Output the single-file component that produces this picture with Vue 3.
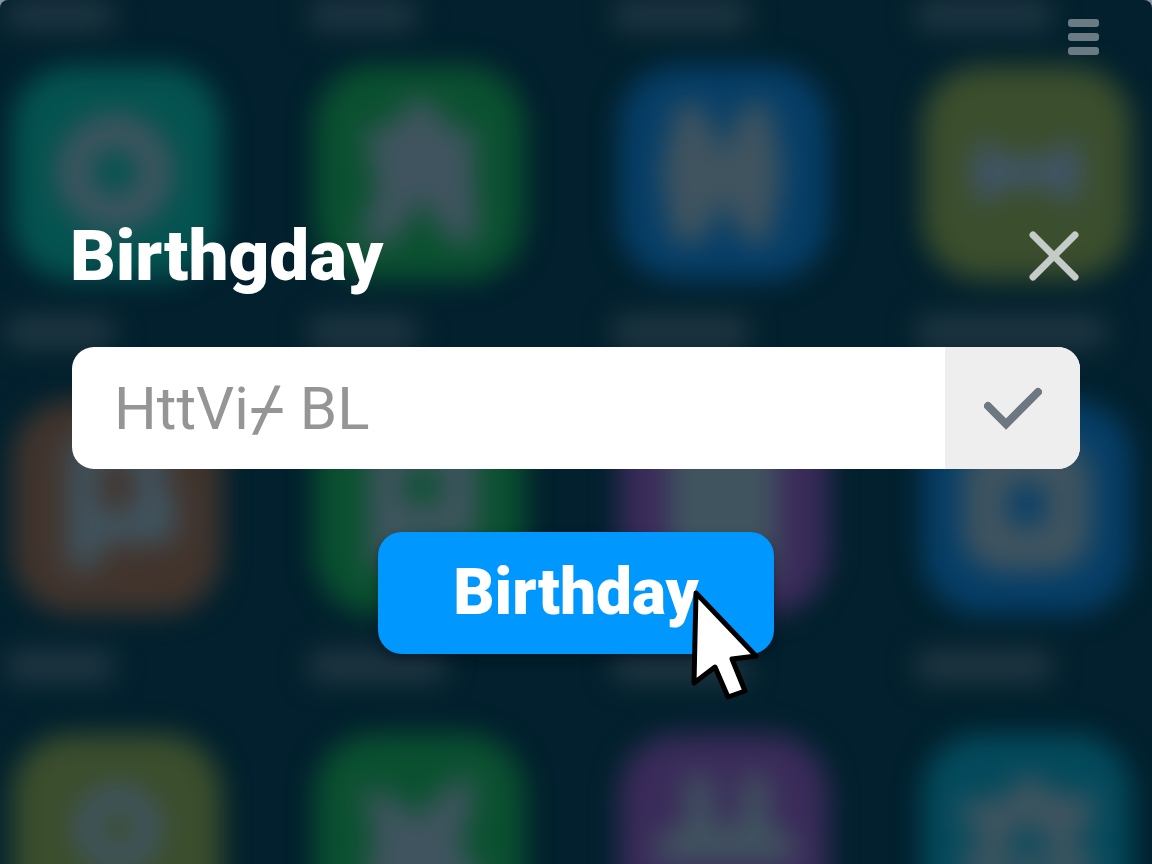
<script setup>
import { ref } from 'vue'

const name = ref('')

const apps = [
  { tone: 'teal', label: 'short', glyph: 'ring' },
  { tone: 'green', label: 'short', glyph: 'puzzle' },
  { tone: 'blue', label: 'medium', glyph: 'butterfly' },
  { tone: 'olive', label: 'long', glyph: 'dumbbell' },
  { tone: 'brown', label: 'short', glyph: 'stamp' },
  { tone: 'green', label: 'medium', glyph: 'loop' },
  { tone: 'purple', label: 'medium', glyph: 'page' },
  { tone: 'blue', label: 'medium', glyph: 'box' },
  { tone: 'olive', label: 'short', glyph: 'dot' },
  { tone: 'green', label: 'short', glyph: 'cross' },
  { tone: 'purple', label: 'medium', glyph: 'plug' },
  { tone: 'cyan', label: 'medium', glyph: 'home' },
]

const topLabels = ['short', 'short', 'medium', 'medium']
</script>

<template>
  <div class="screen">
    <div class="backdrop" aria-hidden="true">
      <div class="grid">
        <span v-for="(size, i) in topLabels" :key="'t' + i" class="label" :class="size"></span>
        <div v-for="(app, i) in apps" :key="i" class="app">
          <div class="tile" :class="app.tone">
            <svg viewBox="0 0 210 210">
              <circle v-if="app.glyph === 'ring'" class="line" cx="103" cy="106" r="41" stroke-width="34" />
              <path v-else-if="app.glyph === 'puzzle'" class="fill" d="M48 62H78Q86 34 106 34T130 62H160V118L164 176H134L108 132L78 178H42L62 122Z" />
              <path v-else-if="app.glyph === 'butterfly'" class="fill" d="M58 38H84L104 88L124 38H150L164 106L150 176H126L104 134L84 176H54L42 106Z" />
              <path v-else-if="app.glyph === 'dumbbell'" class="fill cool" d="M52 78H76V92H134V78H158V134H134V120H76V134H52Z" />
              <path v-else-if="app.glyph === 'stamp'" class="line" d="M72 44H138V110H164M72 44V168M72 127H146V105" stroke-width="32" />
              <path v-else-if="app.glyph === 'loop'" class="line" d="M76 50H144V122H72V170M72 122V50" stroke-width="36" />
              <rect v-else-if="app.glyph === 'page'" class="fill" x="50" y="30" width="108" height="150" rx="10" />
              <rect v-else-if="app.glyph === 'box'" class="line" x="64" y="62" width="82" height="86" rx="16" stroke-width="46" />
              <circle v-else-if="app.glyph === 'dot'" class="line cool" cx="106" cy="94" r="31" stroke-width="22" />
              <path v-else-if="app.glyph === 'cross'" class="fill" d="M46 54Q84 60 104 86Q128 46 160 42L156 82L144 108L174 156H46L60 104Z" />
              <path v-else-if="app.glyph === 'plug'" class="fill" d="M66 42H94V92H122V42H150V92L176 104V128H36V104L66 92Z" />
              <path v-else class="fill" fill-rule="evenodd" d="M106 38L134 60H172V92L154 98V116H172V146H40V116H58V98L40 92V66H78ZM106 86L76 122H136Z" />
            </svg>
          </div>
          <span class="label" :class="app.label"></span>
        </div>
      </div>
    </div>

    <header class="topbar">
      <button class="menu" type="button" aria-label="Menu">
        <span></span><span></span><span></span>
      </button>
    </header>

    <main class="dialog">
      <div class="heading">
        <h1><label for="entry">Birthgday</label></h1>
        <button class="close" type="button" aria-label="Close">
          <svg viewBox="0 0 50 50"><path d="M4 4L46 46M46 4L4 46" /></svg>
        </button>
      </div>

      <div class="field">
        <input id="entry" v-model="name" type="text" placeholder="HttVi⌿ BL" />
        <button class="confirm" type="button" aria-label="Confirm">
          <svg viewBox="0 0 58 44"><path d="M4 20L22 38L54 6" /></svg>
        </button>
      </div>

      <button class="submit" type="button">
        Birthday
        <svg class="pointer" viewBox="0 0 80 122" aria-hidden="true">
          <path d="M10 9L70 72L46 75L59 107L42 113L29 83L8 99Z" />
        </svg>
      </button>
    </main>
  </div>
</template>

<style>
html,
body {
  background: #8b979c;
}
</style>

<style scoped>
.screen {
  position: relative;
  min-height: 100vh;
  overflow: hidden;
  border-radius: 8px 8px 0 0;
  background: #02202d;
  font-family: Roboto, "Noto Sans", sans-serif;
}

.backdrop {
  position: absolute;
  inset: 0;
  overflow: hidden;
}

.grid {
  display: grid;
  grid-template-columns: repeat(4, 210px);
  justify-content: space-between;
  row-gap: 54px;
  padding: 0 20px 0 12px;
  filter: blur(14px);
}

.app {
  display: flex;
  flex-direction: column;
  gap: 36px;
}

.tile {
  height: 214px;
  border-radius: 60px;
}

.tile svg {
  display: block;
  width: 100%;
}

.teal { background: #045350; }
.green { background: #0a5130; }
.blue { background: #063e67; }
.olive { background: #3b4e2d; }
.brown { background: #41342d; }
.purple { background: #3a2b5a; }
.cyan { background: #034a5c; }

.fill {
  fill: #40545f;
}

.line {
  fill: none;
  stroke: #40545f;
}

.fill.cool {
  fill: #40556c;
}

.line.cool {
  stroke: #40556c;
}

.label {
  height: 32px;
  margin-left: -6px;
  border-radius: 8px;
  background: #213743;
}

.grid > .label {
  height: 30px;
  margin-bottom: -18px;
}

.app > .label {
  margin-bottom: -2px;
}

.short { width: 108px; }
.medium { width: 136px; }
.long { width: 190px; }

button {
  border: 0;
  font: inherit;
  cursor: pointer;
}

.topbar {
  position: relative;
  display: flex;
  justify-content: flex-end;
  padding: 19px 53px 0;
}

.menu {
  display: flex;
  flex-direction: column;
  gap: 6px;
  width: 31px;
  padding: 0;
  background: none;
}

.menu span {
  height: 8px;
  border-radius: 3px;
  background: #6a7b83;
}

.dialog {
  position: relative;
  display: flex;
  flex-direction: column;
  align-items: center;
  padding: 156px 72px 0;
}

.heading {
  display: flex;
  justify-content: space-between;
  align-items: center;
  width: 100%;
  height: 90px;
}

h1 {
  margin: 0 0 0 -2px;
  color: #fff;
  font-size: 71px;
  font-weight: 900;
  line-height: 90px;
}

.close {
  width: 50px;
  height: 50px;
  margin-right: 1px;
  padding: 0;
  background: none;
}

.close svg,
.confirm svg {
  display: block;
  width: 100%;
  fill: none;
}

.close path {
  stroke: #c4cbc9;
  stroke-width: 7;
  stroke-linecap: round;
}

.field {
  display: flex;
  width: 100%;
  height: 122px;
  margin-top: 46px;
  overflow: hidden;
  border-radius: 22px;
  background: #fff;
}

input {
  flex: 1;
  min-width: 0;
  padding: 0 42px;
  border: 0;
  outline: 0;
  background: none;
  color: #555;
  font-family: Roboto, "DejaVu Sans Mono", sans-serif;
  font-size: 60px;
}

input::placeholder {
  color: #959595;
  opacity: 1;
}

.confirm {
  width: 135px;
  padding: 0 38px 0 39px;
  background: #eee;
}

.confirm path {
  stroke: #6c7780;
  stroke-width: 8;
  stroke-linecap: round;
}

.submit {
  position: relative;
  height: 122px;
  margin-top: 63px;
  padding: 0 75px;
  border-radius: 24px;
  background: #0098ff;
  box-shadow: 0 6px 12px rgba(0, 10, 20, 0.4);
  color: #fff;
  font-size: 64px;
  font-weight: 900;
  line-height: 122px;
}

.pointer {
  position: absolute;
  right: 8px;
  bottom: -52px;
  width: 80px;
  height: 122px;
  fill: #fff;
  stroke: #000;
  stroke-width: 5;
  stroke-linejoin: round;
}
</style>
